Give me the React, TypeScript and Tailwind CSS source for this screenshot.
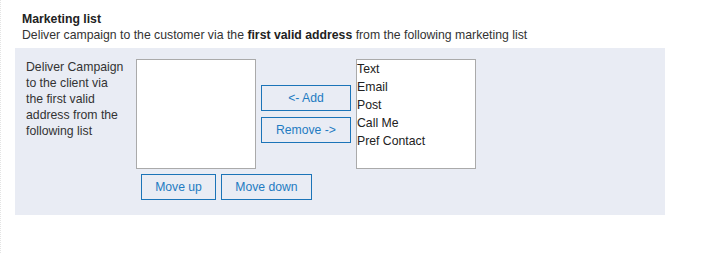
const font = { fontFamily: '"Liberation Sans", Arial, sans-serif' };

const options = ['Text', 'Email', 'Post', 'Call Me', 'Pref Contact'];

function Btn({ label, width }: { label: string; width: string }) {
  return (
    <button
      className={`${width} h-[26px] border border-[#1b74b8] bg-transparent text-[12.2px] leading-none text-[#1e7bc2]`}
    >
      {label}
    </button>
  );
}

export default function App() {
  return (
    <div
      style={font}
      className="w-[722px] h-[253px] bg-white text-[12.25px] leading-[16px] text-[#333] border-l border-dotted border-[#e4e4e4]"
    >
      <div className="pl-[21px] pt-[11px]">
        <div className="font-bold text-[#222]">Marketing list</div>
        <div className="text-[#333]">
          Deliver campaign to the customer via the <b className="text-[#222]">first valid address</b> from the following marketing list
        </div>
      </div>

      <div className="ml-[14px] mt-[5px] w-[650px] h-[167px] bg-[#e9ecf4] pt-[11px] pl-[11px] flex">
        <div className="w-[100px] shrink-0 text-[#333]">
          Deliver Campaign to the client via the first valid address from the following list
        </div>

        <div className="ml-[10px] flex flex-col">
          <div className="flex">
            <div className="w-[120px] h-[110px] bg-white border border-[#aaaaaa]" />

            <div className="ml-[5px] pt-[26px] flex flex-col gap-[6px]">
              <Btn label="<- Add" width="w-[90px]" />
              <Btn label="Remove ->" width="w-[90px]" />
            </div>

            <div className="ml-[5px] w-[120px] h-[110px] bg-white border border-[#aaaaaa] text-[#222]">
              {options.map((o) => (
                <div key={o} className="h-[18px] leading-[18px]">
                  {o}
                </div>
              ))}
            </div>
          </div>

          <div className="mt-[5px] ml-[5px] flex gap-[5px]">
            <Btn label="Move up" width="w-[75px]" />
            <Btn label="Move down" width="w-[91px]" />
          </div>
        </div>
      </div>
    </div>
  );
}
